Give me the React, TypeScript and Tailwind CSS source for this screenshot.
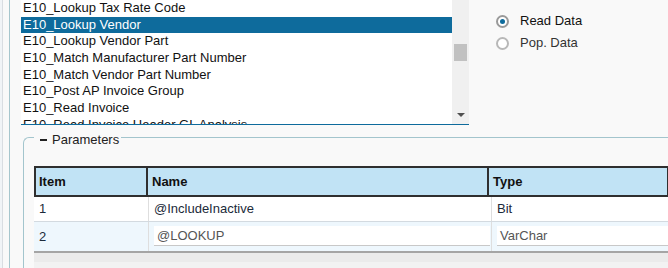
import React from 'react';

const items = [
    'E10_Lookup Tax Rate Code',
    'E10_Lookup Vendor',
    'E10_Lookup Vendor Part',
    'E10_Match Manufacturer Part Number',
    'E10_Match Vendor Part Number',
    'E10_Post AP Invoice Group',
    'E10_Read Invoice',
    'E10_Read Invoice Header GL Analysis',
];

function Radio({ checked, label }: { checked?: boolean; label: string }) {
    return (
        <div className="flex items-center h-[22px] gap-[11px]">
            <span
                className={
                    'w-[13px] h-[13px] rounded-full bg-white border-2 flex items-center justify-center ' +
                    (checked ? 'border-[#9a9a9a]' : 'border-[#b8b8b8]')
                }
            >
                {checked && <span className="w-[5px] h-[5px] rounded-full bg-[#0e6b9c]" />}
            </span>
            <span className={checked ? 'text-[#111]' : 'text-[#333]'}>{label}</span>
        </div>
    );
}

export default function App() {
    return (
        <div className="w-[668px] h-[268px] overflow-hidden bg-[#f9f9f9] flex font-['Liberation_Sans',Arial,sans-serif] text-[13px] text-[#111]">
            {/* left edge strips */}
            <div className="w-[2px] bg-[#f1f4f7]" />
            <div className="w-px bg-[#d9dde2]" />
            <div className="w-[6px]" />
            <div className="w-px bg-[#a6c6cd]" />

            <div className="flex-1 min-w-0 flex flex-col">
                {/* list + options */}
                <div className="flex h-[125px] shrink-0">
                    <div className="ml-[11px] w-[448px] h-[125px] flex bg-white border-b border-[#0e6b9c]">
                        <div className="flex-1 overflow-hidden">
                            {items.map((it, i) => (
                                <div
                                    key={it}
                                    className={
                                        'h-[16.67px] leading-[16.67px] pl-[2px] whitespace-nowrap ' +
                                        (i === 1 ? 'bg-[#0e6b9c] text-white' : 'text-[#111]')
                                    }
                                >
                                    {it}
                                </div>
                            ))}
                        </div>
                        <div className="w-[17px] bg-[#f0f0f0] flex flex-col items-center">
                            <div className="mt-[44px] w-[13px] h-[17px] bg-[#c1c1c1]" />
                            <div className="mt-auto mb-[7px] w-0 h-0 border-l-[4px] border-r-[4px] border-t-[4px] border-l-transparent border-r-transparent border-t-[#505050]" />
                        </div>
                    </div>
                    <div className="ml-[27px] pt-[10px] flex flex-col">
                        <Radio checked label="Read Data" />
                        <Radio label="Pop. Data" />
                    </div>
                </div>

                {/* parameters */}
                <fieldset className="mt-[3px] ml-[13px] border-t border-l border-[#a3c5cd] rounded-tl-[6px] pl-[10px] flex-1 min-w-0">
                    <legend className="px-[6px] pr-[2px] pt-[4px] leading-[15px] text-[#222] flex items-center">
                        <span className="inline-block w-[7px] h-[2px] bg-[#222] mr-[5px]" />
                        Parameters
                    </legend>

                    <div className="mt-[19px] w-[635px]">
                        <div className="flex h-[31px] border-2 border-[#2f2f2f] bg-[#c1e3f5] font-bold text-[#111]">
                            <div className="w-[112px] border-r-2 border-[#2f2f2f] pl-[3px] flex items-center">Item</div>
                            <div className="w-[341px] border-r-2 border-[#2f2f2f] pl-[4px] flex items-center">Name</div>
                            <div className="flex-1 pl-[4px] flex items-center">Type</div>
                        </div>

                        <div className="flex h-[25px] bg-white border-b border-[#d3dae0] text-[#1b2a3a]">
                            <div className="w-[115px] border-r border-[#dedede] pl-[5px] flex items-center">1</div>
                            <div className="w-[343px] border-r border-[#dedede] pl-[5px] flex items-center">@IncludeInactive</div>
                            <div className="flex-1 pl-[5px] flex items-center">Bit</div>
                        </div>

                        <div className="flex h-[29px] bg-[#eef7fd] text-[#1b2a3a]">
                            <div className="w-[115px] border-r border-[#dedede] pl-[5px] flex items-center">2</div>
                            <div className="w-[343px] border-r border-[#dedede] pl-[5px] pr-[1px] pt-[4px]">
                                <div className="h-[20px] bg-white border-b border-[#c8c8c8] pl-[3px] leading-[19px] text-[#555]">@LOOKUP</div>
                            </div>
                            <div className="flex-1 pl-[5px] pt-[4px]">
                                <div className="h-[20px] bg-white border-b border-[#c8c8c8] pl-[3px] leading-[19px] text-[#555]">VarChar</div>
                            </div>
                        </div>

                        <div className="border-t-2 border-[#a5a5a5] bg-[#ebebeb] h-[11px]" />
                        <div className="bg-[#f2f2f2] h-[10px]" />
                    </div>
                </fieldset>
            </div>
        </div>
    );
}
